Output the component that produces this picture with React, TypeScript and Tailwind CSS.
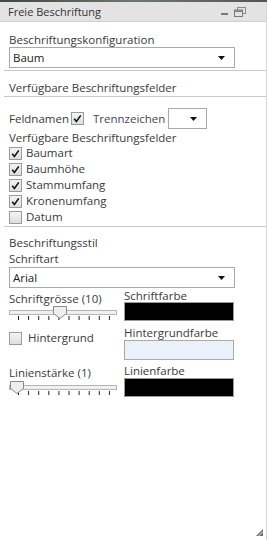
import React from "react"

const font = { fontFamily: '"Open Sans", "Noto Sans", sans-serif' }

function Arrow() {
  return (
    <svg width="7" height="4" viewBox="0 0 7 4" className="shrink-0">
      <path d="M0 0h7L3.5 4z" fill="#111" />
    </svg>
  )
}

function Select({ value, className = "" }: { value: string; className?: string }) {
  return (
    <div className={`flex items-center justify-between border border-[#a9a9a9] bg-white h-[21px] pl-[3px] pr-[9px] text-[11.5px] text-[#222] ${className}`}>
      <span>{value}</span>
      <Arrow />
    </div>
  )
}

function Check({ checked }: { checked: boolean }) {
  return (
    <span className="w-[13px] h-[13px] border border-[#9a9a9a] bg-gradient-to-b from-[#f4f4f4] to-[#dedede] flex items-center justify-center shrink-0">
      {checked && (
        <svg width="9" height="9" viewBox="0 0 9 9">
          <path d="M1.2 4.8 3.4 7.4 7.8 1.4" fill="none" stroke="#111" strokeWidth="1.6" />
        </svg>
      )}
    </span>
  )
}

function Slider({ pos }: { pos: number }) {
  return (
    <div className="relative w-[108px] h-[14px]">
      <div className="absolute left-0 right-0 top-[4px] h-[5px] border border-[#b5b5b5] bg-[#f0f0f0]" />
      <svg className="absolute left-0 top-[10px]" width="108" height="4" viewBox="0 0 108 4">
        {[0, 1, 2, 3, 4, 5, 6, 7, 8, 9].map((i) => (
          <line key={i} x1={9.5 + i * 10.1} x2={9.5 + i * 10.1} y1="0" y2="4" stroke="#222" strokeWidth="1" />
        ))}
      </svg>
      <svg className="absolute top-0" style={{ left: pos }} width="14" height="13" viewBox="0 0 14 13">
        <path d="M0.5 0.5h13v7l-6.5 5-6.5-5z" fill="#eeeeee" stroke="#8a8a8a" />
      </svg>
    </div>
  )
}

export default function App() {
  const fields: [string, boolean][] = [
    ["Baumart", true],
    ["Baumhöhe", true],
    ["Stammumfang", true],
    ["Kronenumfang", true],
    ["Datum", false],
  ]

  return (
    <div className="w-[267px] h-[540px] bg-white flex flex-col text-[11.5px] text-[#3a3a3a] overflow-hidden" style={font}>
      <div className="h-[2px] bg-gradient-to-r from-[#3d4a3f] via-[#6b7a6e] to-[#4c5a52]" />
      <div className="flex flex-1 flex-col border-r border-[#d6d6d6]">
        <div className="h-[20px] bg-[#e3e3e3] border-b border-[#cfcfcf] flex items-center justify-between pl-[8px] pr-[20px]">
          <span className="text-[11px] text-[#333] mt-[1px]">Freie Beschriftung</span>
          <div className="flex items-end gap-[6px]">
            <span className="w-[7px] h-[2px] bg-[#7a7a7a] mb-[2px]" />
            <svg width="12" height="10" viewBox="0 0 12 10">
              <rect x="3.5" y="0.5" width="8" height="6" fill="none" stroke="#8a8a8a" />
              <rect x="0.5" y="3" width="8" height="6.5" fill="#e3e3e3" stroke="#7a7a7a" />
              <rect x="1" y="3.5" width="7" height="1.5" fill="#7a7a7a" />
            </svg>
          </div>
        </div>

        <div className="pt-[11px] px-[9px]">
          <div className="leading-[14px]">Beschriftungskonfiguration</div>
          <Select value="Baum" className="w-[226px]" />
        </div>
        <div className="ml-[4px] mt-[2px] border-t border-[#c8c8c8]" />

        <div className="px-[9px] pt-[10px] pb-[1px] leading-[14px]">Verfügbare Beschriftungsfelder</div>
        <div className="ml-[4px] border-t border-[#c8c8c8]" />

        <div className="px-[9px] pt-[11px]">
          <div className="flex items-center">
            <span>Feldnamen</span>
            <span className="ml-[2px]">
              <Check checked />
            </span>
            <span className="ml-[9px] text-[#4a4454]">Trennzeichen</span>
            <Select value="" className="ml-[3px] w-[39px] h-[21px] pr-[9px]" />
          </div>
          <div className="mt-[2px] leading-[14px]">Verfügbare Beschriftungsfelder</div>
          <div className="flex flex-col">
            {fields.map(([label, on]) => (
              <div key={label} className="flex items-center gap-[4px] h-[16px]">
                <Check checked={on} />
                <span>{label}</span>
              </div>
            ))}
          </div>
        </div>
        <div className="ml-[4px] mt-[1px] border-t border-[#c8c8c8]" />

        <div className="px-[9px] pt-[8px]">
          <div className="leading-[16px]">Beschriftungsstil</div>
          <div className="leading-[16px]">Schriftart</div>
          <Select value="Arial" className="w-[226px]" />

          <div className="grid grid-cols-[115px_110px] mt-[1px] items-start">
            <div className="flex flex-col">
              <span className="leading-[15px] mt-[2px]">Schriftgrösse (10)</span>
              <Slider pos={44} />
            </div>
            <div className="flex flex-col">
              <span className="leading-[13px]">Schriftfarbe</span>
              <div className="h-[19px] border border-[#9a9a9a] bg-black" />
            </div>
          </div>

          <div className="grid grid-cols-[115px_110px] mt-[5px] items-start">
            <div className="flex items-center gap-[6px] mt-[6px]">
              <Check checked={false} />
              <span className="leading-[12px] -mt-[2px]">Hintergrund</span>
            </div>
            <div className="flex flex-col">
              <span className="leading-[14px]">Hintergrundfarbe</span>
              <div className="h-[20px] border border-[#a9a9a9] bg-[#eaf1fb]" />
            </div>
          </div>

          <div className="grid grid-cols-[115px_110px] mt-[4px] items-start">
            <div className="flex flex-col">
              <span className="leading-[16px] mt-[1px]">Linienstärke (1)</span>
              <Slider pos={1} />
            </div>
            <div className="flex flex-col">
              <span className="leading-[14px]">Linienfarbe</span>
              <div className="h-[19px] border border-[#9a9a9a] bg-black" />
            </div>
          </div>
        </div>

        <div className="flex-1" />
        <div className="flex justify-end pr-[3px] pb-[4px]">
          <svg width="7" height="7" viewBox="0 0 7 7">
            <path d="M7 0v7H0z" fill="#6e6e6e" />
            <path d="M7 2.5 2.5 7" stroke="#fff" strokeWidth="0.8" />
          </svg>
        </div>
      </div>
    </div>
  )
}
